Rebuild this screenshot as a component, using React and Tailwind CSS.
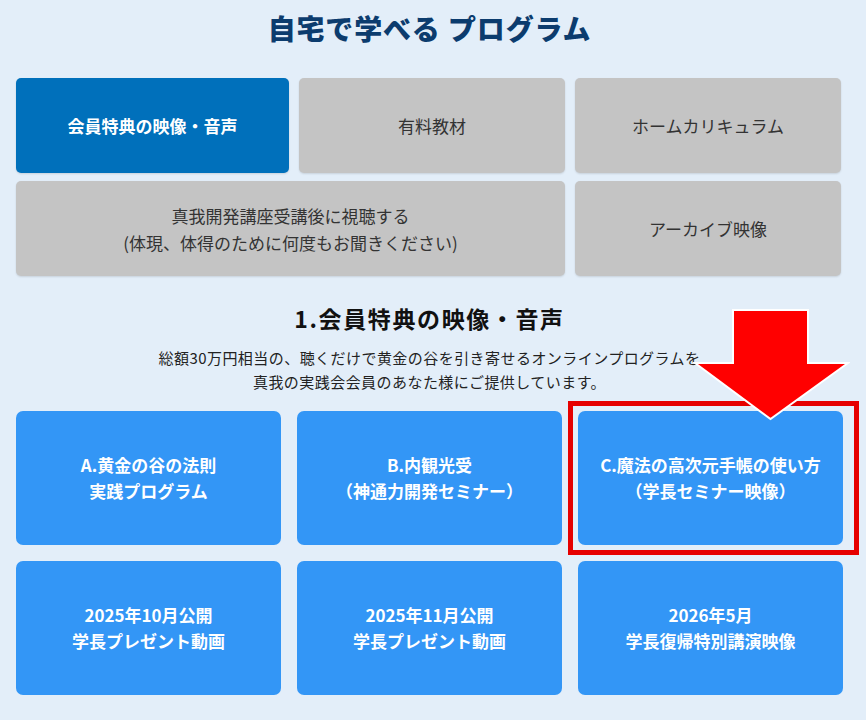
const tabs = [
  { label: ['会員特典の映像・音声'], active: true },
  { label: ['有料教材'] },
  { label: ['ホームカリキュラム'] },
  { label: ['真我開発講座受講後に視聴する', '(体現、体得のために何度もお聞きください)'], wide: true },
  { label: ['アーカイブ映像'] },
]

const cards = [
  ['A.黄金の谷の法則', '実践プログラム'],
  ['B.内観光受', '（神通力開発セミナー）'],
  ['C.魔法の高次元手帳の使い方', '（学長セミナー映像）'],
  ['2025年10月公開', '学長プレゼント動画'],
  ['2025年11月公開', '学長プレゼント動画'],
  ['2026年5月', '学長復帰特別講演映像'],
]

const DownArrow = () => (
  <svg
    className="absolute left-[115px] top-[-103px] pointer-events-none"
    width="157"
    height="114"
    viewBox="0 0 157 114"
  >
    <polygon
      points="40,2 115,2 115,55 155,55 77.5,111 2,55 40,55"
      fill="#ff0000"
      stroke="#ffffff"
      strokeWidth="2"
      strokeLinejoin="miter"
    />
  </svg>
)

const Tab = ({ tab }) => (
  <div
    className={
      'flex h-[95px] flex-col items-center justify-center rounded-[5px] text-center text-[17px] leading-[27px] shadow-[0_1px_2px_rgba(0,0,0,0.12)] ' +
      (tab.active ? 'bg-[#0070bb] font-bold text-white' : 'bg-[#c4c4c4] text-[#333333]') +
      (tab.wide ? ' col-span-2' : '')
    }
  >
    {tab.label.map((line) => (
      <span key={line}>{line}</span>
    ))}
  </div>
)

const Card = ({ lines, highlight }) => (
  <div className="relative">
    <div className="flex h-[134px] flex-col items-center justify-center rounded-[7px] bg-[#3396f6] text-center text-[17px] font-bold leading-[26px] text-white">
      {lines.map((line) => (
        <span key={line}>{line}</span>
      ))}
    </div>
    {highlight && (
      <>
        <div className="pointer-events-none absolute left-[-10px] right-[-16px] top-[-10px] bottom-[-10px] border-[5px] border-[#e60000]" />
        <DownArrow />
      </>
    )}
  </div>
)

export default function App() {
  return (
    <div
      className="min-h-[720px] w-full bg-[#e3eef9]"
      style={{ fontFamily: '"Noto Sans CJK JP", "Noto Sans", sans-serif' }}
    >
      <div className="w-[843px] pl-4 pt-2">
        <h1 className="text-center text-[28px] font-extrabold leading-[40px] tracking-[0.03em] text-[#0c3c6e]">
          自宅で学べる プログラム
        </h1>

        <div className="mt-[30px] grid grid-cols-[273px_266px_266px] gap-x-[10px] gap-y-[8px]">
          {tabs.map((tab) => (
            <Tab key={tab.label[0]} tab={tab} />
          ))}
        </div>

        <h2 className="mt-[26px] text-center text-[23px] font-bold leading-[32px] tracking-[0.07em] text-[#111111]">
          1.会員特典の映像・音声
        </h2>
        <p className="mt-[12px] text-center text-[15px] leading-[24px] tracking-[0.03em] text-[#222222]">
          総額30万円相当の、聴くだけで黄金の谷を引き寄せるオンラインプログラムを
          <br />
          真我の実践会会員のあなた様にご提供しています。
        </p>

        <div className="mt-[17px] grid grid-cols-3 gap-4">
          {cards.map((lines, i) => (
            <Card key={lines.join()} lines={lines} highlight={i === 2} />
          ))}
        </div>
      </div>
    </div>
  )
}
